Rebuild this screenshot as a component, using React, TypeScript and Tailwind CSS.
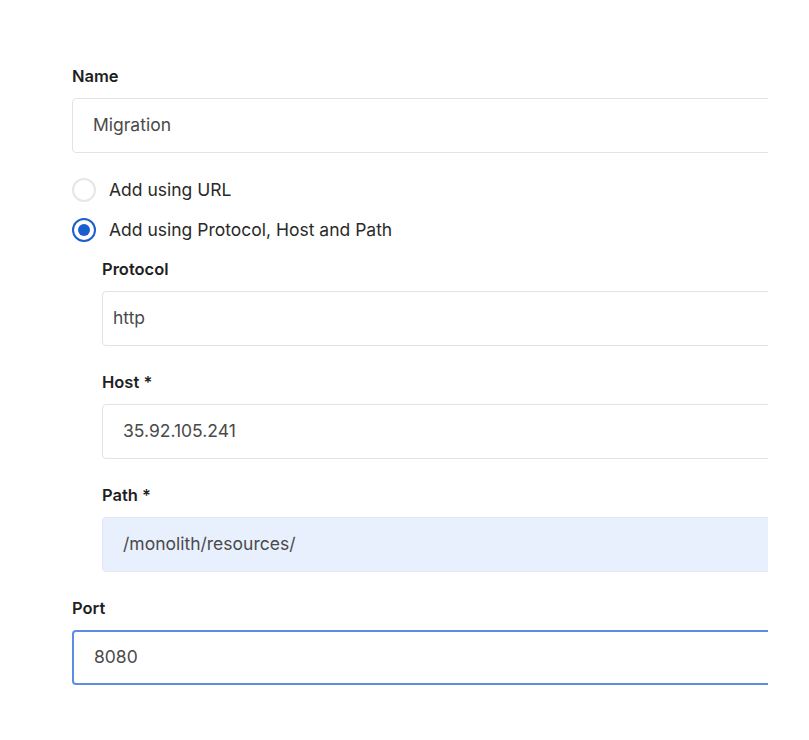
import React, { useState } from "react";

type FieldProps = {
  label: string;
  value: string;
  pad?: string;
  extra?: string;
};

const Field: React.FC<FieldProps> = ({ label, value, pad = "pl-5", extra = "border border-[#e3e3e3] bg-white" }) => {
  return (
    <div className="flex flex-col">
      <label className="h-5 text-[16.5px] leading-5 font-semibold text-[#1f1f1f]">{label}</label>
      <div className={`mt-3 h-[55px] w-[800px] rounded-[4px] flex items-center ${pad} ${extra}`}>
        <span className="text-[17.5px] text-[#4a4a4a]">{value}</span>
      </div>
    </div>
  );
};

const App: React.FC = () => {
  const [mode, setMode] = useState<string>("parts");

  return (
    <div className="min-h-[740px] bg-white" style={{ fontFamily: "Inter, 'Noto Sans', sans-serif" }}>
      <div className="w-[768px] overflow-hidden pl-[72px] pt-[66px]">
        <Field label="Name" value="Migration" />

        <div className="mt-[25px] flex flex-col gap-4">
          <button className="flex items-center gap-[13px] h-6" onClick={() => setMode("url")}>
            <span className={`w-6 h-6 rounded-full border-2 flex items-center justify-center ${mode === "url" ? "border-[#1b5fcf]" : "border-[#e6e6e9]"}`}>
              {mode === "url" && <span className="w-3 h-3 rounded-full bg-[#1b5fcf]" />}
            </span>
            <span className="text-[17.5px] text-[#2a2a2a]">Add using URL</span>
          </button>
          <button className="flex items-center gap-[13px] h-6" onClick={() => setMode("parts")}>
            <span className={`w-6 h-6 rounded-full border-2 flex items-center justify-center ${mode === "parts" ? "border-[#1b5fcf]" : "border-[#e6e6e9]"}`}>
              {mode === "parts" && <span className="w-3 h-3 rounded-full bg-[#1b5fcf]" />}
            </span>
            <span className="text-[17.5px] text-[#2a2a2a]">Add using Protocol, Host and Path</span>
          </button>
        </div>

        <div className="pl-[30px] mt-[17px] flex flex-col gap-[26px]">
          <Field label="Protocol" value="http" pad="pl-[10px]" />
          <Field label="Host *" value="35.92.105.241" />
          <Field label="Path *" value="/monolith/resources/" extra="border border-[#e3e7f0] bg-[#e8f0fe]" />
        </div>

        <div className="mt-[26px]">
          <Field label="Port" value="8080" extra="border-2 border-[#5b8ee0] bg-white" />
        </div>
      </div>
    </div>
  );
};

export default App;
